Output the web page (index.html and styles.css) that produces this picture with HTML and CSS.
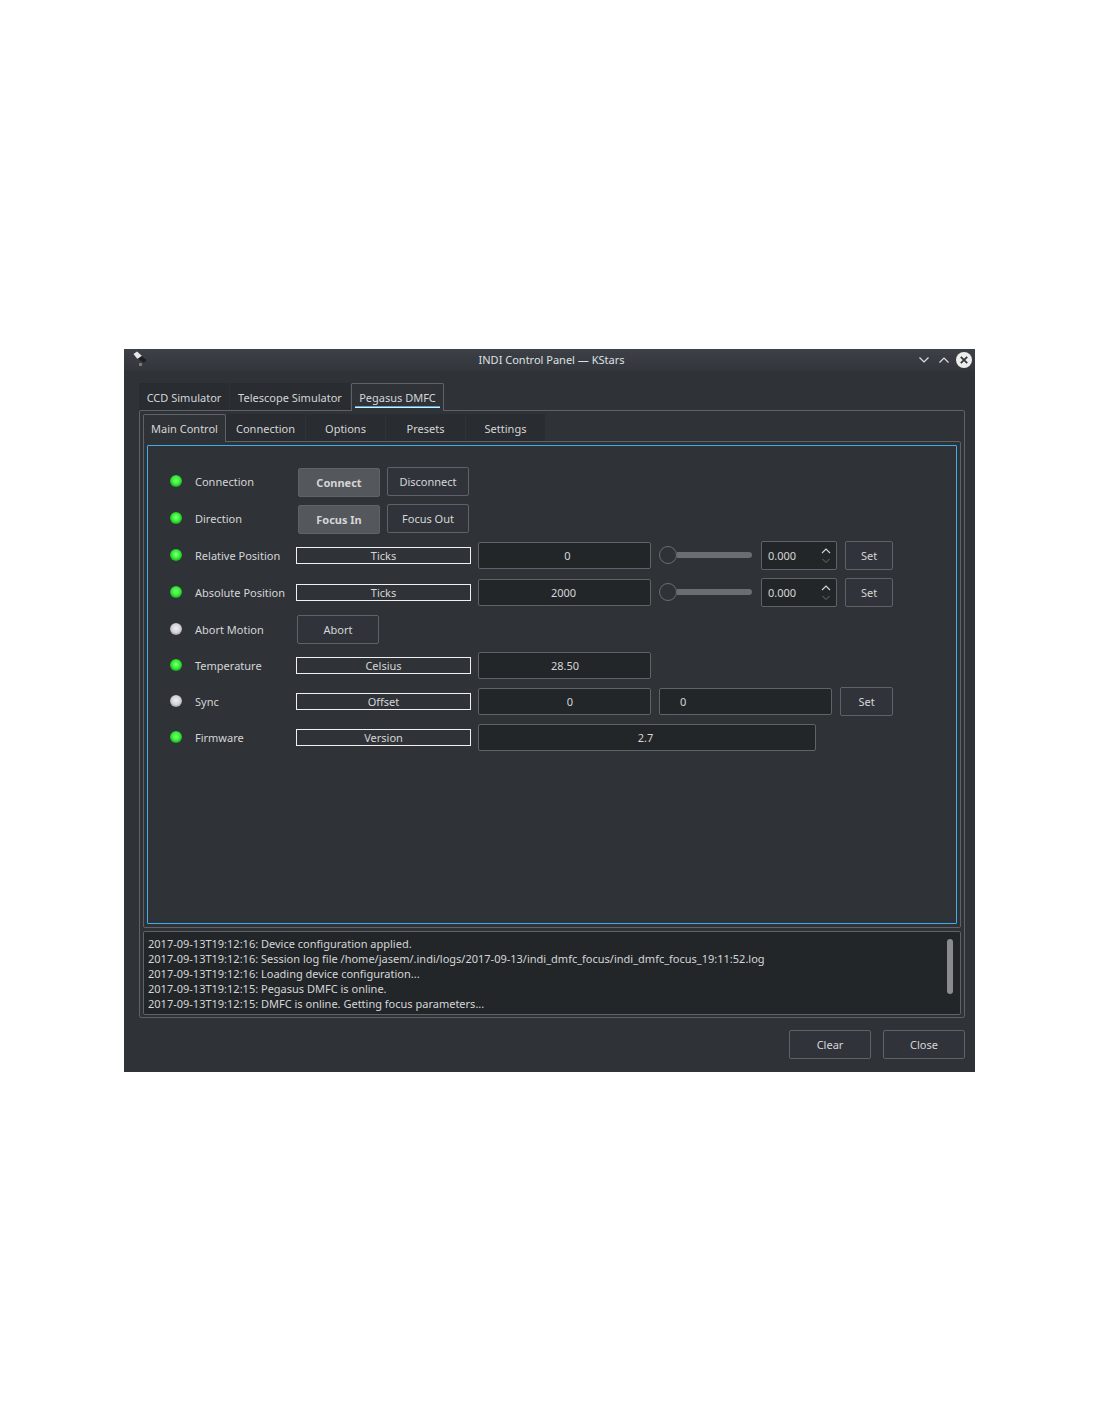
FILE: index.html
```html
<!DOCTYPE html>
<html lang="en">

<head>
    <meta charset="UTF-8">
    <title>INDI Control Panel — KStars</title>
    <link rel="stylesheet" href="styles.css">
</head>

<body>
    <div class="window">

        <!-- Title bar -->
        <div class="titlebar">
            <svg class="app-icon" width="16" height="18" viewBox="0 0 16 18">
                <path d="M1.5 3 L5 0.5 L10 5 L8.5 8 L5 7.5 Z" fill="#e8e8e8" />
                <path d="M6 7.5 L9.5 5 L14.5 9 L12 11.5 L9 10 Z" fill="#1d1f22" />
                <path d="M7 12 L10 12 L10 15 L7 15 Z" fill="#777a7e" />
            </svg>
            <span class="title">INDI Control Panel — KStars</span>
            <svg class="win-btn" width="12" height="8" viewBox="0 0 12 8">
                <path d="M1.5 1.5 L6 6 L10.5 1.5" fill="none" stroke="#dfe1e3" stroke-width="1.2" />
            </svg>
            <svg class="win-btn" width="12" height="8" viewBox="0 0 12 8">
                <path d="M1.5 6.5 L6 2 L10.5 6.5" fill="none" stroke="#dfe1e3" stroke-width="1.2" />
            </svg>
            <svg class="win-close" width="16" height="16" viewBox="0 0 16 16">
                <circle cx="8" cy="8" r="8" fill="#eceded" />
                <path d="M4.8 4.8 L11.2 11.2 M11.2 4.8 L4.8 11.2" stroke="#33363b" stroke-width="1.8" />
            </svg>
        </div>

        <!-- Device tabs -->
        <div class="tabs device-tabs">
            <div class="tab tab-ccd">CCD Simulator</div>
            <div class="tab tab-scope">Telescope Simulator</div>
            <div class="tab tab-active tab-dmfc"><span class="focus-label">Pegasus DMFC</span></div>
        </div>

        <div class="device-pane">
            <!-- Group tabs -->
            <div class="tabs group-tabs">
                <div class="tab tab-active tab-main">Main Control</div>
                <div class="tab tab-group">Connection</div>
                <div class="tab tab-group">Options</div>
                <div class="tab tab-group">Presets</div>
                <div class="tab tab-group">Settings</div>
            </div>

            <div class="group-pane">
                <div class="props">

                    <div class="row row-tall">
                        <span class="led led-ok"></span>
                        <span class="prop-name">Connection</span>
                        <div class="btn btn-on">Connect</div>
                        <div class="btn btn-side">Disconnect</div>
                    </div>

                    <div class="row row-tall">
                        <span class="led led-ok"></span>
                        <span class="prop-name">Direction</span>
                        <div class="btn btn-on">Focus In</div>
                        <div class="btn btn-side">Focus Out</div>
                    </div>

                    <div class="row row-pos">
                        <span class="led led-ok"></span>
                        <span class="prop-name">Relative Position</span>
                        <div class="unit">Ticks</div>
                        <div class="field field-rel">0</div>
                        <div class="slider">
                            <span class="handle"></span>
                            <span class="track"></span>
                        </div>
                        <div class="spin">
                            <span>0.000</span>
                            <svg width="10" height="18" viewBox="0 0 10 18">
                                <path d="M1 6 L5 2 L9 6" fill="none" stroke="#d5d7d9" stroke-width="1.1" />
                                <path d="M1.5 12 L5 15.5 L8.5 12" fill="none" stroke="#6a6d71" stroke-width="1" />
                            </svg>
                        </div>
                        <div class="btn btn-set">Set</div>
                    </div>

                    <div class="row row-pos">
                        <span class="led led-ok"></span>
                        <span class="prop-name">Absolute Position</span>
                        <div class="unit">Ticks</div>
                        <div class="field field-abs">2000</div>
                        <div class="slider">
                            <span class="handle"></span>
                            <span class="track"></span>
                        </div>
                        <div class="spin">
                            <span>0.000</span>
                            <svg width="10" height="18" viewBox="0 0 10 18">
                                <path d="M1 6 L5 2 L9 6" fill="none" stroke="#d5d7d9" stroke-width="1.1" />
                                <path d="M1.5 12 L5 15.5 L8.5 12" fill="none" stroke="#6a6d71" stroke-width="1" />
                            </svg>
                        </div>
                        <div class="btn btn-set">Set</div>
                    </div>

                    <div class="row row-pos">
                        <span class="led led-idle"></span>
                        <span class="prop-name">Abort Motion</span>
                        <div class="btn btn-abort">Abort</div>
                    </div>

                    <div class="row row-short">
                        <span class="led led-ok"></span>
                        <span class="prop-name">Temperature</span>
                        <div class="unit">Celsius</div>
                        <div class="field field-temp">28.50</div>
                    </div>

                    <div class="row row-mid">
                        <span class="led led-idle"></span>
                        <span class="prop-name">Sync</span>
                        <div class="unit">Offset</div>
                        <div class="field field-sync">0</div>
                        <div class="field field-edit">0</div>
                        <div class="btn btn-set-wide">Set</div>
                    </div>

                    <div class="row row-mid">
                        <span class="led led-ok"></span>
                        <span class="prop-name">Firmware</span>
                        <div class="unit">Version</div>
                        <div class="field field-long">2.7</div>
                    </div>

                </div>
            </div>

            <!-- Log -->
            <div class="log">
                <div class="log-lines">
                    <div>2017-09-13T19:12:16: Device configuration applied.</div>
                    <div>2017-09-13T19:12:16: Session log file /home/jasem/.indi/logs/2017-09-13/indi_dmfc_focus/indi_dmfc_focus_19:11:52.log</div>
                    <div>2017-09-13T19:12:16: Loading device configuration...</div>
                    <div>2017-09-13T19:12:15: Pegasus DMFC is online.</div>
                    <div>2017-09-13T19:12:15: DMFC is online. Getting focus parameters...</div>
                </div>
                <span class="scrollbar"></span>
            </div>
        </div>

        <div class="footer">
            <div class="btn btn-foot">Clear</div>
            <div class="btn btn-foot">Close</div>
        </div>
    </div>
</body>

</html>
```
FILE: styles.css
```css
/* General Reset */
* {
    margin: 0;
    padding: 0;
    box-sizing: border-box;
}

body {
    background-color: #fff;
    color: #d4d6d8;
    font-family: "Noto Sans", sans-serif;
    font-size: 11px;
    line-height: 15px;
    height: 1422px;
    padding: 349px 0 0 124px;
    overflow: hidden;
}

/* Window */
.window {
    width: 851px;
    height: 723px;
    background-color: #2f3237;
    display: flex;
    flex-direction: column;
}

.titlebar {
    height: 22px;
    flex-shrink: 0;
    background: linear-gradient(#3d4148, #32353a);
    display: flex;
    align-items: center;
    padding: 0 3px 0 8px;
}

.title {
    flex: 1;
    text-align: center;
    padding-left: 41px;
    padding-right: 4px;
    margin-bottom: 2px;
    color: #dfe1e3;
}

.win-btn {
    margin-right: 8px;
}

.win-btn + .win-btn {
    margin-right: 6px;
}

/* Tabs */
.tabs {
    display: flex;
    flex-shrink: 0;
    height: 27px;
}

.device-tabs {
    margin: 12px 0 0 15px;
}

.group-tabs {
    margin: 3px 0 0 3px;
}

.tab {
    background-color: #292c30;
    display: flex;
    align-items: center;
    justify-content: center;
    border-right: 1px solid #2f3237;
    padding-top: 2px;
}

.tab-active {
    background-color: #2f3237;
    border: 1px solid #5f6266;
    border-bottom: none;
    border-radius: 2px 2px 0 0;
    position: relative;
    z-index: 1;
    height: 28px;
    padding-top: 0;
}

.tab-ccd { width: 91px; }
.tab-scope { width: 121px; }
.tab-dmfc { width: 93px; }
.tab-main { width: 83px; }
.tab-group { width: 80px; }

.focus-label {
    border-bottom: 1px solid #3daee9;
    box-shadow: 0 1px 0 #e8e8e8;
    padding: 0 4px 1px;
    margin-top: 1px;
}

.device-pane {
    margin: 0 10px 0 15px;
    height: 608px;
    border: 1px solid #5f6266;
    border-radius: 2px;
    flex-shrink: 0;
}

.group-pane {
    margin: 0 3px;
    height: 487px;
    border: 1px solid #5f6266;
    border-radius: 2px;
    padding: 3px;
}

.props {
    height: 479px;
    border: 1px solid #3daee9;
    border-radius: 1px;
    padding: 21px 0 0 22px;
    display: flex;
    flex-direction: column;
    gap: 7px;
}

/* Property rows */
.row {
    display: flex;
    align-items: center;
}

.row-tall { height: 30px; }
.row-mid { height: 29px; }

.row-short {
    height: 27px;
    margin-bottom: 1px;
}

.row-pos {
    height: 29px;
    margin-bottom: 1px;
}

.led {
    width: 12px;
    height: 12px;
    border-radius: 50%;
    flex-shrink: 0;
    margin-bottom: 1px;
}

.row-tall .led {
    margin-bottom: 2px;
}

.led-ok {
    background: radial-gradient(circle at 50% 45%, #8dff8d 0, #2ff02f 45%, #1fa01f 75%, #16401c 100%);
}

.led-idle {
    background: radial-gradient(circle at 50% 45%, #f2f2f4 0, #d2d2d6 50%, #9a9a9e 75%, #44464a 100%);
}

.prop-name {
    width: 101px;
    margin-left: 13px;
    flex-shrink: 0;
}

.row-tall .prop-name {
    margin-bottom: 2px;
}

.btn {
    height: 29px;
    border: 1px solid #5f6266;
    border-radius: 2px;
    background-color: #30343a;
    display: flex;
    align-items: center;
    justify-content: center;
    flex-shrink: 0;
}

.btn-on {
    width: 82px;
    margin: 1px 0 0 2px;
    background-color: #54575c;
    font-weight: bold;
}

.btn-side {
    width: 82px;
    margin: -1px 0 0 7px;
}

.btn-abort {
    width: 82px;
    margin-left: 1px;
}

.btn-set {
    width: 48px;
    margin-left: 8px;
}

.btn-set-wide {
    width: 53px;
    margin-left: 8px;
}

.unit {
    width: 175px;
    height: 17px;
    border: 1px solid #f0f0f0;
    display: flex;
    align-items: center;
    justify-content: center;
    flex-shrink: 0;
}

.field {
    width: 173px;
    height: 27px;
    margin-left: 7px;
    border: 1px solid #5f6266;
    border-radius: 2px;
    background-color: #232629;
    display: flex;
    align-items: center;
    justify-content: center;
    flex-shrink: 0;
}

.field-rel { padding-left: 6px; }
.field-abs { padding-right: 2px; }
.field-sync { padding-left: 11px; }
.field-temp { padding-left: 1px; }

.field-edit {
    margin-left: 8px;
    justify-content: flex-start;
    padding-left: 20px;
}

.field-long {
    width: 338px;
    padding-right: 3px;
}

.slider {
    width: 93px;
    margin: 0 0 1px 8px;
    display: flex;
    align-items: center;
    flex-shrink: 0;
}

.handle {
    width: 18px;
    height: 18px;
    border-radius: 50%;
    border: 1px solid #6a6d71;
    background-color: #2f3237;
    flex-shrink: 0;
}

.track {
    flex: 1;
    height: 6px;
    background-color: #6a6d71;
    border-radius: 0 3px 3px 0;
}

.spin {
    width: 76px;
    height: 29px;
    margin-left: 9px;
    border: 1px solid #5f6266;
    border-radius: 2px;
    background-color: #232629;
    display: flex;
    align-items: center;
    justify-content: space-between;
    padding: 0 5px 0 6px;
    flex-shrink: 0;
}

/* Log */
.log {
    margin: 3px 3px 0;
    height: 84px;
    border: 1px solid #5f6266;
    border-radius: 2px;
    background-color: #232629;
    display: flex;
    justify-content: space-between;
    padding: 4px 7px 0 4px;
}

.log-lines {
    white-space: nowrap;
}

.scrollbar {
    width: 6px;
    height: 55px;
    margin-top: 3px;
    border-radius: 3px;
    background-color: #8a8c8e;
}

/* Footer */
.footer {
    display: flex;
    justify-content: flex-end;
    gap: 12px;
    margin: 12px 10px 0 0;
}

.btn-foot {
    width: 82px;
}
```
